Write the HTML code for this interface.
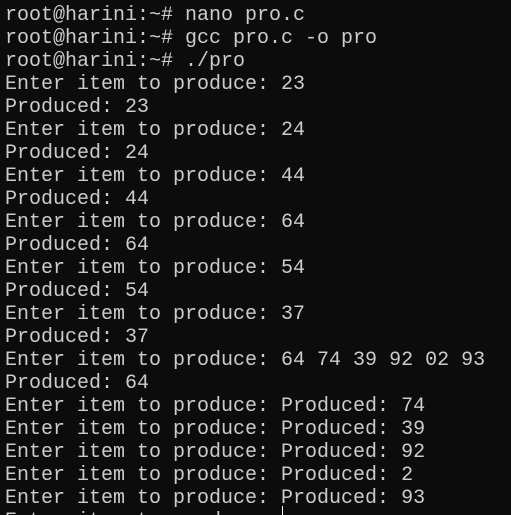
<!DOCTYPE html>
<html><head><style>
html,body{margin:0;padding:0;background:#0c0c0c;width:511px;height:515px;overflow:hidden}
pre{margin:0;padding:4px 0 0 5px;font-family:"Liberation Mono",monospace;font-size:20px;line-height:23px;color:#cccccc;letter-spacing:0}
.cur{position:absolute;left:282px;top:506px;width:1px;height:9px;background:#fff}
</style></head><body><pre>root@harini:~# nano pro.c
root@harini:~# gcc pro.c -o pro
root@harini:~# ./pro
Enter item to produce: 23
Produced: 23
Enter item to produce: 24
Produced: 24
Enter item to produce: 44
Produced: 44
Enter item to produce: 64
Produced: 64
Enter item to produce: 54
Produced: 54
Enter item to produce: 37
Produced: 37
Enter item to produce: 64 74 39 92 02 93
Produced: 64
Enter item to produce: Produced: 74
Enter item to produce: Produced: 39
Enter item to produce: Produced: 92
Enter item to produce: Produced: 2
Enter item to produce: Produced: 93
Enter item to produce: </pre><div class="cur"></div></body></html>
